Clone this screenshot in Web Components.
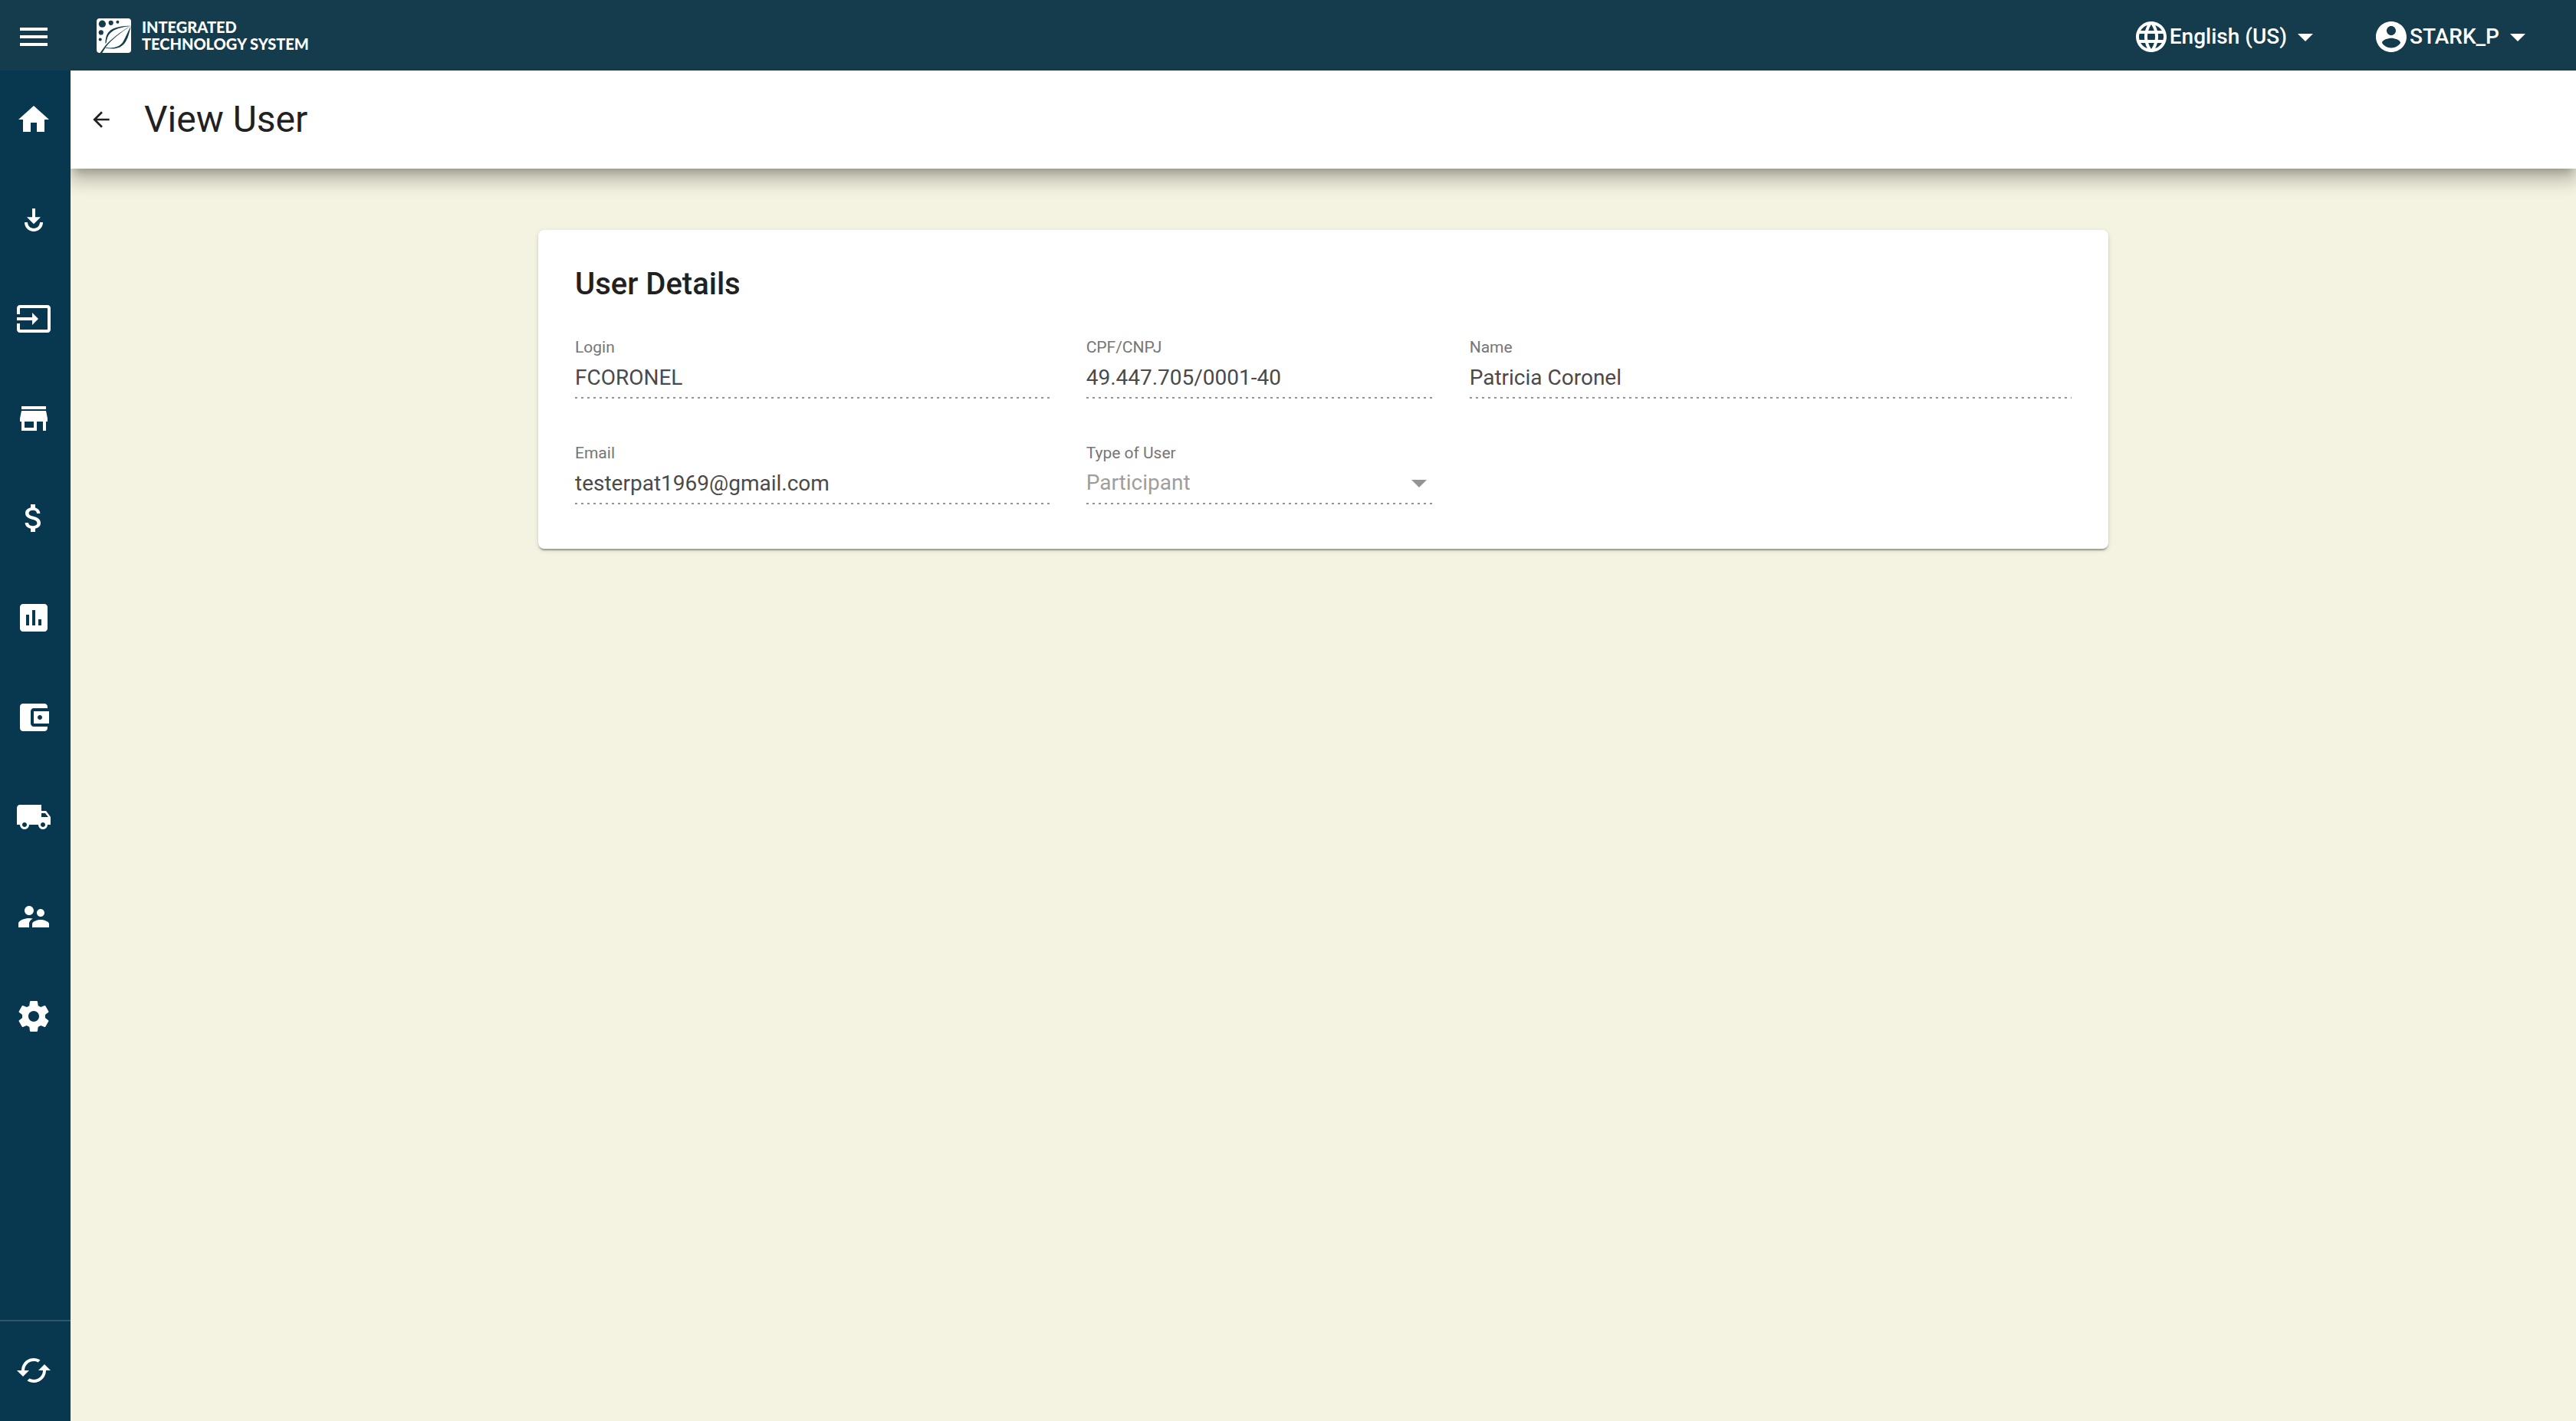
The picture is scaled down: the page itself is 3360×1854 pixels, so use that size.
<!DOCTYPE html>
<html lang="en">
<head>
<meta charset="utf-8">
<title>View User</title>
<style>
  :root {
    --topbar: #143c4c;
    --sidebar: #083850;
    --canvas: #f4f2e0;
    --ink: #212121;
  }
  html, body { margin: 0; }
  body { font-family: Roboto, "Liberation Sans", sans-serif; color: var(--ink); background: var(--canvas); }
</style>
</head>
<body>
<app-shell>
  <app-topbar slot="topbar"></app-topbar>
  <app-sidebar slot="sidebar"></app-sidebar>
  <page-header slot="main" heading="View User"></page-header>
  <details-card slot="main" heading="User Details">
    <text-field class="w4" label="Login" value="FCORONEL"></text-field>
    <text-field class="w3" label="CPF/CNPJ" value="49.447.705/0001-40"></text-field>
    <text-field class="w5" label="Name" value="Patricia Coronel"></text-field>
    <text-field class="w4" label="Email" value="testerpat1969@gmail.com"></text-field>
    <select-field class="w3" label="Type of User" value="Participant"></select-field>
  </details-card>
</app-shell>

<script>
const ICONS = {
  menu: 'M3 18h18v-2H3v2zm0-5h18v-2H3v2zm0-7v2h18V6H3z',
  home: 'M10 20v-6h4v6h5v-8h3L12 3 2 12h3v8z',
  receive: 'M11 5v5.59H7.5l4.5 4.5 4.5-4.5H13V5h-2zm-5 9c0 3.31 2.69 6 6 6s6-2.69 6-6h-2c0 2.21-1.79 4-4 4s-4-1.79-4-4H6z',
  input: 'M21 3.01H3c-1.1 0-2 .9-2 2V9h2V4.99h18v14.03H3V15H1v4.01c0 1.1.9 1.98 2 1.98h18c1.1 0 2-.88 2-1.98v-14c0-1.11-.9-2-2-2zM11 16l4-4-4-4v3H1v2h10v3z',
  store: 'M20 4H4v2h16V4zm1 10v-2l-1-5H4l-1 5v2h1v6h10v-6h4v6h2v-6h1zm-9 4H6v-4h6v4z',
  money: 'M11.8 10.9c-2.27-.59-3-1.2-3-2.15 0-1.09 1.01-1.85 2.7-1.85 1.78 0 2.44.85 2.5 2.1h2.21c-.07-1.72-1.12-3.3-3.21-3.81V3h-3v2.16c-1.94.42-3.5 1.68-3.5 3.61 0 2.31 1.91 3.46 4.7 4.13 2.5.6 3 1.48 3 2.41 0 .69-.49 1.79-2.7 1.79-2.06 0-2.87-.92-2.98-2.1h-2.2c.12 2.19 1.76 3.42 3.68 3.83V21h3v-2.15c1.95-.37 3.5-1.5 3.5-3.55 0-2.84-2.43-3.81-4.7-4.4z',
  chart: 'M19 3H5c-1.1 0-2 .9-2 2v14c0 1.1.9 2 2 2h14c1.1 0 2-.9 2-2V5c0-1.1-.9-2-2-2zM9 17H7v-7h2v7zm4 0h-2V7h2v10zm4 0h-2v-4h2v4z',
  wallet: 'M21 18v1c0 1.1-.9 2-2 2H5c-1.11 0-2-.9-2-2V5c0-1.1.89-2 2-2h14c1.1 0 2 .9 2 2v1h-9c-1.11 0-2 .9-2 2v8c0 1.1.89 2 2 2h9zm-9-2h10V8H12v8zm4-2.5c-.83 0-1.5-.67-1.5-1.5s.67-1.5 1.5-1.5 1.5.67 1.5 1.5-.67 1.5-1.5 1.5z',
  truck: 'M20 8h-3V4H3c-1.1 0-2 .9-2 2v11h2c0 1.66 1.34 3 3 3s3-1.34 3-3h6c0 1.66 1.34 3 3 3s3-1.34 3-3h2v-5l-3-4zM6 18.5c-.83 0-1.5-.67-1.5-1.5s.67-1.5 1.5-1.5 1.5.67 1.5 1.5-.67 1.5-1.5 1.5zm13.5-9l1.96 2.5H17V9.5h2.5zm-1.5 9c-.83 0-1.5-.67-1.5-1.5s.67-1.5 1.5-1.5 1.5.67 1.5 1.5-.67 1.5-1.5 1.5z',
  people: 'M16.5 12c1.38 0 2.49-1.12 2.49-2.5S17.88 7 16.5 7C15.12 7 14 8.12 14 9.5s1.12 2.5 2.5 2.5zM9 11c1.66 0 2.99-1.34 2.99-3S10.66 5 9 5C7.34 5 6 6.34 6 8s1.34 3 3 3zm7.5 3c-1.83 0-5.5.92-5.5 2.75V19h11v-2.25c0-1.83-3.67-2.75-5.5-2.75zM9 13c-2.33 0-7 1.17-7 3.5V19h7v-2.25c0-.85.33-2.34 2.37-3.47C10.5 13.1 9.66 13 9 13z',
  settings: 'M19.43 12.98c.04-.32.07-.64.07-.98s-.03-.66-.07-.98l2.11-1.65c.19-.15.24-.42.12-.64l-2-3.46c-.12-.22-.39-.3-.61-.22l-2.49 1c-.52-.4-1.08-.73-1.69-.98l-.38-2.65C14.46 2.18 14.25 2 14 2h-4c-.25 0-.46.18-.49.42l-.38 2.65c-.61.25-1.17.59-1.69.98l-2.49-1c-.23-.09-.49 0-.61.22l-2 3.46c-.13.22-.07.49.12.64l2.11 1.65c-.04.32-.07.65-.07.98s.03.66.07.98l-2.11 1.65c-.19.15-.24.42-.12.64l2 3.46c.12.22.39.3.61.22l2.49-1c.52.4 1.08.73 1.69.98l.38 2.65c.03.24.24.42.49.42h4c.25 0 .46-.18.49-.42l.38-2.65c.61-.25 1.17-.59 1.69-.98l2.49 1c.23.09.49 0 .61-.22l2-3.46c.12-.22.07-.49-.12-.64l-2.11-1.65zM12 15.5c-1.93 0-3.5-1.57-3.5-3.5s1.57-3.5 3.5-3.5 3.5 1.57 3.5 3.5-1.57 3.5-3.5 3.5z',
  sync: 'M19 8l-4 4h3c0 3.31-2.69 6-6 6-1.01 0-1.97-.25-2.8-.7l-1.46 1.46C8.97 19.54 10.43 20 12 20c4.42 0 8-3.58 8-8h3l-4-4zM6 12c0-3.31 2.69-6 6-6 1.01 0 1.97.25 2.8.7l1.46-1.46C15.03 4.46 13.57 4 12 4c-4.42 0-8 3.58-8 8H1l4 4 4-4H6z',
  back: 'M20 11H7.83l5.59-5.59L12 4l-8 8 8 8 1.41-1.41L7.83 13H20v-2z',
  caret: 'M7 10l5 5 5-5z',
  globe: 'M11.99 2C6.47 2 2 6.48 2 12s4.47 10 9.99 10C17.52 22 22 17.52 22 12S17.52 2 11.99 2zm6.93 6h-2.95c-.32-1.25-.78-2.45-1.38-3.56 1.84.63 3.37 1.91 4.33 3.56zM12 4.04c.83 1.2 1.48 2.53 1.91 3.96h-3.82c.43-1.43 1.08-2.76 1.91-3.96zM4.26 14C4.1 13.36 4 12.69 4 12s.1-1.36.26-2h3.38c-.08.66-.14 1.32-.14 2s.06 1.34.14 2H4.26zm.82 2h2.95c.32 1.25.78 2.45 1.38 3.56-1.84-.63-3.37-1.9-4.33-3.56zm2.95-8H5.08c.96-1.66 2.49-2.93 4.33-3.56C8.81 5.55 8.35 6.75 8.03 8zM12 19.96c-.83-1.2-1.48-2.53-1.91-3.96h3.82c-.43 1.43-1.08 2.76-1.91 3.96zM14.34 14H9.66c-.09-.66-.16-1.32-.16-2s.07-1.35.16-2h4.68c.09.65.16 1.32.16 2s-.07 1.34-.16 2zm.25 5.56c.6-1.11 1.06-2.31 1.38-3.56h2.95c-.96 1.65-2.49 2.93-4.33 3.56zM16.36 14c.08-.66.14-1.32.14-2s-.06-1.34-.14-2h3.38c.16.64.26 1.31.26 2s-.1 1.36-.26 2h-3.38z',
  account: 'M12 2C6.48 2 2 6.48 2 12s4.48 10 10 10 10-4.48 10-10S17.52 2 12 2zm0 3c1.66 0 3 1.34 3 3s-1.34 3-3 3-3-1.34-3-3 1.34-3 3-3zm0 14.2c-2.5 0-4.71-1.28-6-3.22.03-1.99 4-3.08 6-3.08 1.99 0 5.97 1.09 6 3.08-1.29 1.94-3.5 3.22-6 3.22z'
};

function define(name, render) {
  customElements.define(name, class extends HTMLElement {
    connectedCallback() {
      if (this.shadowRoot) return;
      this.attachShadow({ mode: 'open' }).innerHTML = render(this);
    }
  });
}

define('ui-icon', el => `
  <style>
    :host { display: block; width: var(--icon-size, 48px); height: var(--icon-size, 48px); flex: none; }
    svg { display: block; width: 100%; height: 100%; fill: currentColor; }
  </style>
  <svg viewBox="0 0 24 24" aria-hidden="true"><path d="${ICONS[el.getAttribute('name')]}"/></svg>`);

define('brand-logo', () => `
  <style>
    :host { display: flex; align-items: flex-start; gap: 14px; color: #fff;
      font: 900 20px/22px Lato, "Open Sans", sans-serif; }
    svg { display: block; width: 45px; height: 45px; }
    span { display: block; white-space: nowrap; }
  </style>
  <svg viewBox="0 0 45 45" aria-hidden="true">
    <rect width="45" height="45" rx="4" fill="#fff"/>
    <g fill="#143c4c">
      <circle cx="7.4" cy="7.2" r="4.6"/><circle cx="18.7" cy="5.8" r="3.1"/><circle cx="27.4" cy="4.7" r="2"/>
      <circle cx="5.8" cy="18.4" r="3.1"/><circle cx="4.7" cy="27.4" r="2"/>
      <path d="M45 9.8C34 9.8 22 11 16 17.5c-4 4.4-4.5 10.500-4.6 15.500l1.300-1.500c.6-5 2-9.500 5.300-12.600C24 13.200 33 11.500 45 9.800z"/>
      <path d="M45 9.800C31 17 19 27.500 11.400 35.500L4.500 45h2.700l5.300-8.300C20 27.500 31 18.500 45 9.800z"/>
      <path d="M45 9.800c-2 6-3 14-7 20.500C33 39 23 41 11.600 38.800l.6-.8c10 1.400 18-.8 22.300-7.500C38.500 24 41 16 45 9.800z"/>
    </g>
  </svg>
  <div><span>INTEGRATED</span><span>TECHNOLOGY SYSTEM</span></div>`);

define('topbar-menu', el => `
  <style>
    :host { display: block; }
    button { display: flex; align-items: center; margin: 0; padding: 0; border: 0; background: none;
      color: #fff; font: 500 28px/48px Roboto, sans-serif; cursor: pointer; white-space: nowrap; }
  </style>
  <button type="button" aria-haspopup="menu"><ui-icon name="${el.getAttribute('icon')}"></ui-icon><slot></slot><ui-icon name="caret"></ui-icon></button>`);

define('app-topbar', () => `
  <style>
    :host { display: flex; align-items: flex-start; box-sizing: border-box; height: 92px;
      padding: 24px 52px 0 20px; background: var(--topbar); color: #fff; position: relative; z-index: 2; }
    .toggle { display: block; padding: 0; border: 0; margin: 0 58px 0 0; background: none; color: inherit; cursor: pointer; }
    a { color: inherit; text-decoration: none; }
    nav { display: flex; gap: 64px; margin-left: auto; }
  </style>
  <button class="toggle" type="button" aria-label="Toggle menu"><ui-icon name="menu"></ui-icon></button>
  <a href="#" aria-label="Integrated Technology System"><brand-logo></brand-logo></a>
  <nav><topbar-menu icon="globe">English (US)</topbar-menu><topbar-menu icon="account">STARK_P</topbar-menu></nav>`);

define('app-sidebar', () => {
  const items = [['home', 'Home'], ['receive', 'Receive'], ['input', 'Entries'], ['store', 'Store'], ['money', 'Finance'],
    ['chart', 'Reports'], ['wallet', 'Wallet'], ['truck', 'Shipping'], ['people', 'Users'], ['settings', 'Settings']];
  return `
  <style>
    :host { display: flex; flex-direction: column; justify-content: space-between; width: 92px;
      background: var(--sidebar); color: #fff; position: relative; z-index: 1; }
    nav { display: flex; flex-direction: column; align-items: flex-start; gap: 82px; padding: 40px 20px; }
    a { display: block; color: inherit; }
    footer { padding: 40px 20px 42px; border-top: 2px solid #2f576a; }
    button { display: block; margin: 0; padding: 0; border: 0; background: none; color: inherit; cursor: pointer; }
  </style>
  <nav>${items.map(([icon, label]) => `<a href="#" aria-label="${label}"><ui-icon name="${icon}"></ui-icon></a>`).join('')}</nav>
  <footer><button type="button" aria-label="Refresh"><ui-icon name="sync"></ui-icon></button></footer>`;
});

define('page-header', el => `
  <style>
    :host { display: flex; align-items: center; gap: 40px; box-sizing: border-box; height: 128px; padding: 0 24px;
      background: #fff; box-shadow: 0 10px 10px -6px rgba(0,0,0,.2), 0 16px 20px 2px rgba(0,0,0,.14), 0 6px 28px 4px rgba(0,0,0,.12); }
    a { --icon-size: 32px; display: block; color: var(--ink); }
    h1 { margin: 0; font-size: 48px; line-height: 56px; font-weight: 400; }
  </style>
  <a href="#" aria-label="Back"><ui-icon name="back"></ui-icon></a>
  <h1>${el.getAttribute('heading')}</h1>`);

define('details-card', el => `
  <style>
    :host { display: block; box-sizing: border-box; width: calc(100% - 96px); max-width: 2048px; margin: 80px auto;
      padding: 48px 48px 58px; border-radius: 8px; background: #fff;
      box-shadow: 0 4px 2px -2px rgba(0,0,0,.2), 0 2px 2px 0 rgba(0,0,0,.14), 0 2px 6px 0 rgba(0,0,0,.12); }
    h2 { margin: 0 0 46px; font-size: 40px; line-height: 46px; font-weight: 500; }
    form { display: grid; grid-template-columns: repeat(12, minmax(0, 1fr)); gap: 58px 48px; }
    ::slotted(.w3) { grid-column: span 3; }
    ::slotted(.w4) { grid-column: span 4; }
    ::slotted(.w5) { grid-column: span 5; }
  </style>
  <h2>${el.getAttribute('heading')}</h2>
  <form><slot></slot></form>`);

const FIELD_STYLE = `
    :host { display: block; min-width: 0; }
    label { display: block; color: #767676; font-size: 21px; line-height: 26px; }
    input, select { display: block; box-sizing: border-box; width: 100%; height: 54px; margin: 0; padding: 10px 0 12px;
      border: 0; border-radius: 0; outline: 0; appearance: none; font: 400 28px/32px Roboto, sans-serif; opacity: 1;
      background: repeating-linear-gradient(to right, #949494 0 3px, transparent 3px 8px) left bottom / 100% 2px no-repeat; }`;

define('text-field', el => `
  <style>${FIELD_STYLE}
    input { color: #4a4a4a; }
  </style>
  <label for="field">${el.getAttribute('label')}</label>
  <input id="field" type="text" value="${el.getAttribute('value')}" disabled>`);

define('select-field', el => `
  <style>${FIELD_STYLE}
    select { grid-area: 1 / 1; color: #9e9e9e; }
    .box { display: grid; align-items: center; }
    .arrow { grid-area: 1 / 1; justify-self: end; margin-right: 8px; pointer-events: none;
      border: solid transparent; border-width: 10px 10px 0; border-top-color: #949494; }
  </style>
  <label for="field">${el.getAttribute('label')}</label>
  <div class="box">
    <select id="field" disabled><option>${el.getAttribute('value')}</option></select>
    <span class="arrow"></span>
  </div>`);

define('app-shell', () => `
  <style>
    :host { display: flex; flex-direction: column; min-height: 100vh; }
    .body { display: flex; flex: 1; }
    .rail { display: flex; flex: none; }
    main { flex: 1; min-width: 0; overflow: hidden; }
  </style>
  <slot name="topbar"></slot>
  <div class="body">
    <div class="rail"><slot name="sidebar"></slot></div>
    <main><slot name="main"></slot></main>
  </div>`);
</script>
</body>
</html>
